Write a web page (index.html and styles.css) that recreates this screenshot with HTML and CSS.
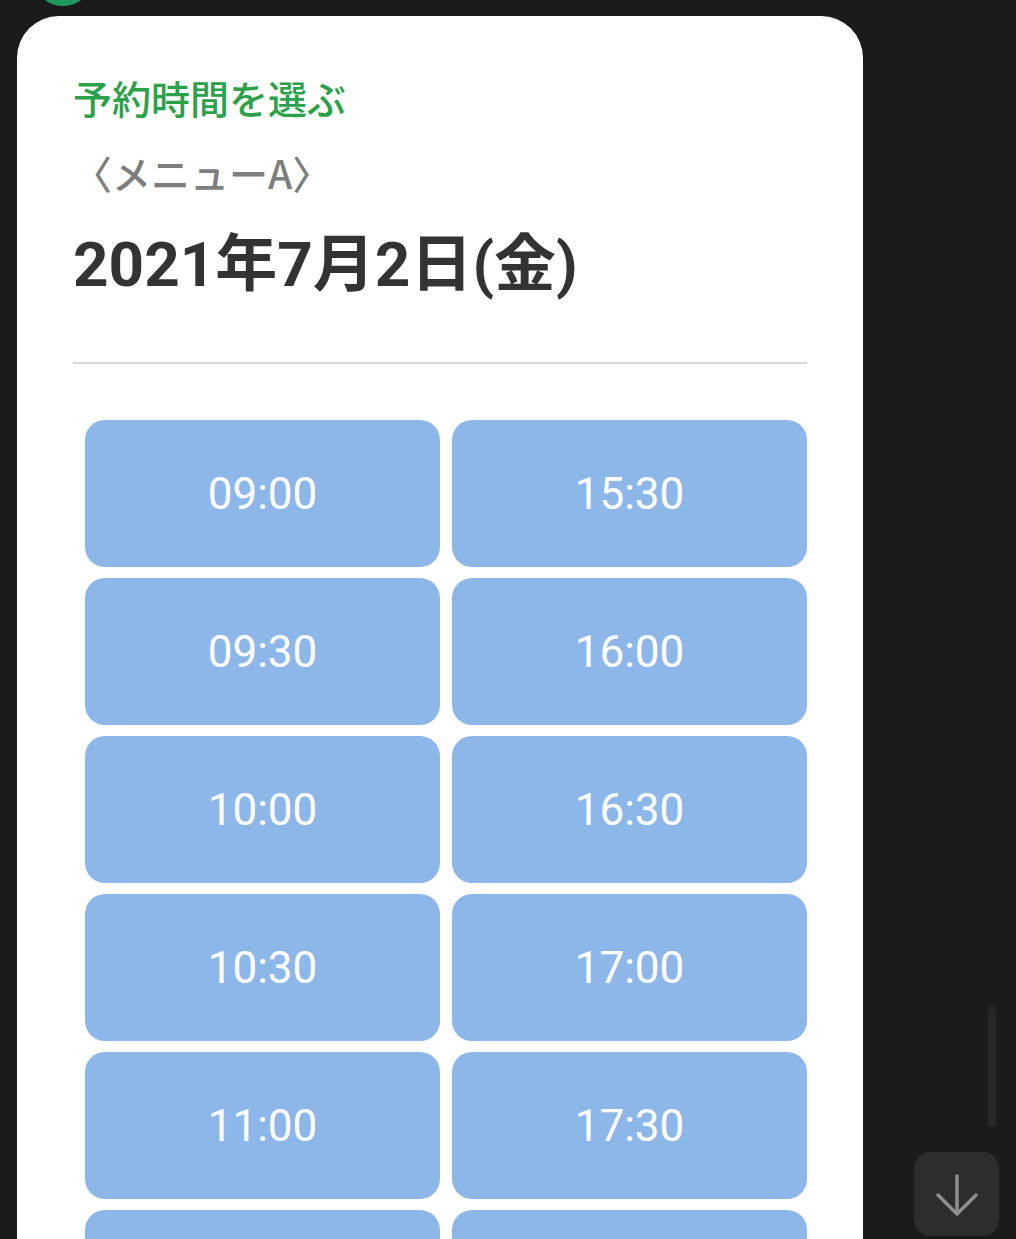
FILE: index.html
```html
<!DOCTYPE html>
<html lang="ja">
<head>
    <meta charset="UTF-8">
    <meta name="viewport" content="width=device-width, initial-scale=1.0">
    <title>予約時間を選ぶ</title>
    <link rel="stylesheet" href="styles.css">
</head>
<body>

    <div class="avatar"></div>

    <div class="chat">
        <div class="card">
            <h2 class="card-title">予約時間を選ぶ</h2>
            <p class="menu-name">〈メニューA〉</p>
            <p class="date">2021年7月2日(金)</p>
            <hr class="divider">

            <div class="slots">
                <button class="slot">09:00</button>
                <button class="slot">15:30</button>
                <button class="slot">09:30</button>
                <button class="slot">16:00</button>
                <button class="slot">10:00</button>
                <button class="slot">16:30</button>
                <button class="slot">10:30</button>
                <button class="slot">17:00</button>
                <button class="slot">11:00</button>
                <button class="slot">17:30</button>
                <button class="slot">11:30</button>
                <button class="slot">18:00</button>
            </div>
        </div>
    </div>

    <div class="scrollbar"></div>

    <button class="scroll-down" aria-label="一番下へ">
        <svg width="44" height="44" viewBox="0 0 44 44">
            <path d="M22 4 V42 M3 23 L22 42 L41 23" fill="none" stroke="#8e8e8e" stroke-width="3.5" stroke-linecap="round" stroke-linejoin="round"/>
        </svg>
    </button>

</body>
</html>
```

FILE: styles.css
```css
html, body {
    height: 100%;
}

body {
    margin: 0;
    background-color: #1b1b1b;
    font-family: "Noto Sans CJK JP", "Noto Sans", sans-serif;
    overflow: hidden;
}

.avatar {
    position: absolute;
    left: 33px;
    top: -54px;
    width: 60px;
    height: 60px;
    border-radius: 50%;
    background-color: #1f9a5e;
}

.chat {
    padding: 16px 0 0 17px;
}

.card {
    width: 846px;
    box-sizing: border-box;
    background-color: #fff;
    border-radius: 42px;
    padding: 55px 56px 60px 56px;
}

.card-title {
    margin: 0;
    font-size: 39px;
    line-height: 52px;
    font-weight: 500;
    color: #2ba14a;
}

.menu-name {
    margin: 24px 0 0 0;
    font-size: 39px;
    line-height: 50px;
    font-weight: 500;
    color: #7e7e7e;
}

.date {
    margin: 28px 0 0 0;
    font-family: Roboto, "Noto Sans CJK JP", sans-serif;
    font-size: 62px;
    line-height: 80px;
    font-weight: 700;
    color: #333;
}

.divider {
    margin: 57px 0 0 0;
    border: none;
    border-top: 2px solid #d6d6d6;
}

.slots {
    margin: 56px 0 0 12px;
    display: grid;
    grid-template-columns: 1fr 1fr;
    column-gap: 12px;
    row-gap: 11px;
}

.slot {
    height: 147px;
    border: none;
    border-radius: 20px;
    background-color: #8db7e8;
    color: #fff;
    font-family: Roboto, "Noto Sans", sans-serif;
    font-size: 44px;
    font-weight: 400;
    cursor: pointer;
}

.scrollbar {
    position: absolute;
    left: 988px;
    top: 1006px;
    width: 8px;
    height: 121px;
    border-radius: 4px;
    background-color: #292929;
}

.scroll-down {
    position: absolute;
    left: 914px;
    top: 1152px;
    width: 85px;
    height: 84px;
    border: none;
    border-radius: 16px;
    background-color: #2d2d2d;
    display: flex;
    align-items: center;
    justify-content: center;
    padding: 0;
}
```
